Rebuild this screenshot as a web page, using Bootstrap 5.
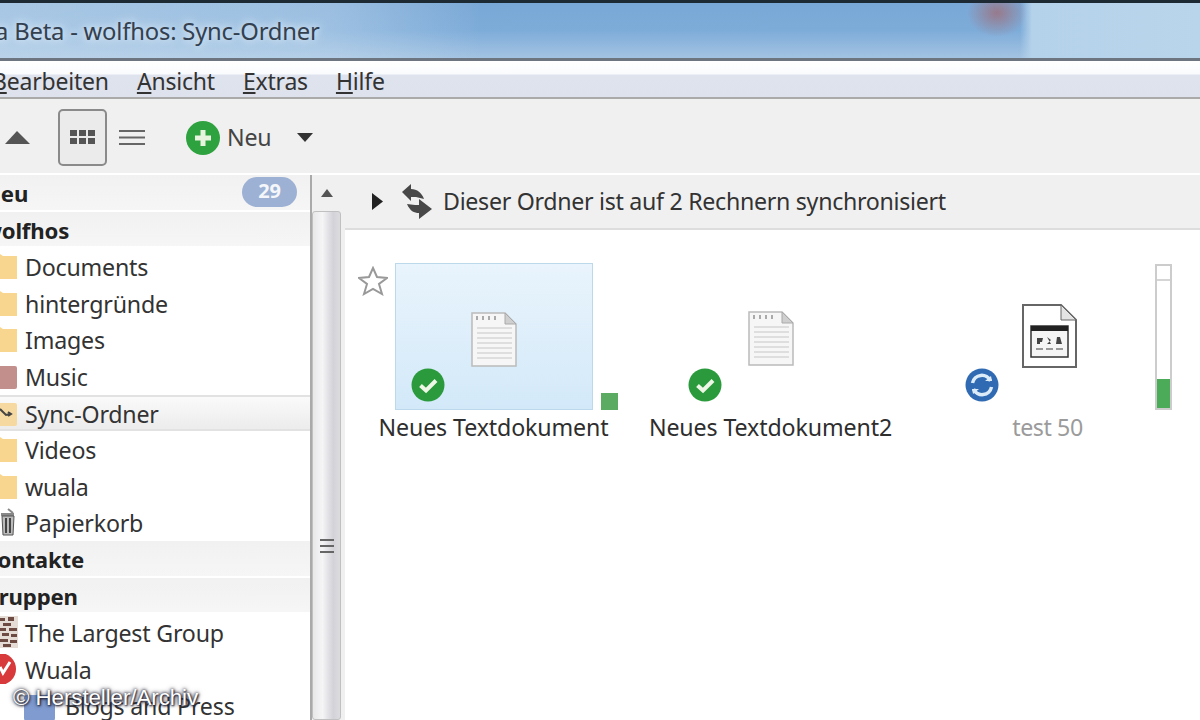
<!DOCTYPE html>
<html lang="de"><head><meta charset="utf-8"><title>Wuala Beta</title>
<link href="https://cdn.jsdelivr.net/npm/bootstrap@5.3.0/dist/css/bootstrap.min.css" rel="stylesheet">
<style>
html,body{width:1200px;height:720px;overflow:hidden;margin:0}
body{font-family:"Noto Sans","Open Sans",sans-serif;font-size:23.2px;color:#333;background:#fff;position:relative;letter-spacing:-.2px}
.titlebar{height:61px;border-top:3px solid #1d2a33;border-bottom:3px solid #6d7680;background:
 radial-gradient(ellipse 30px 24px at 997px 10px,rgba(170,90,90,.6),transparent),
 linear-gradient(90deg,transparent 0,transparent 1020px,#b4d2ea 1032px,#b9d5ec 100%),
 linear-gradient(90deg,rgba(205,224,240,.55) 0,rgba(205,224,240,.4) 330px,transparent 480px),
 linear-gradient(180deg,#7aa8d6 0,#7eacd9 50%,#a3c3e2 100%);color:#33404f;font-size:23.8px;line-height:56px;white-space:nowrap}
.titlebar span{margin-left:-5px;text-shadow:0 0 12px #dceaf5,0 0 6px #dceaf5}
.menubar{height:38px;background:linear-gradient(180deg,#fff 0,#fafbfd 35%,#dfe3ee 40%,#dde2ed 100%);border-bottom:2px solid #aaa;gap:28px;line-height:41px;font-size:23px}
.menubar div:first-child{margin-left:-8px}
.toolbar{height:76px;background:#f0f0f0;border-bottom:2px solid #fff;padding-top:3px}
.viewbtn{width:49px;height:57px;padding:0;background:#ebebeb;border:2px solid #8a8a8a;border-radius:5px;margin-left:24px}
.listicon{margin-left:12px}
.plusicon{margin-left:41px}
.dropicon{margin-left:26px}
.mainarea{height:545px}
.sidepane{width:310px;background:#fff;overflow:hidden}
.siderow{height:36.6px;flex:none;line-height:38px;white-space:nowrap}
.sidehead{font-weight:700;background:linear-gradient(180deg,#f1f1f1,#f6f6f6);border-bottom:2px solid #fff;color:#222;font-size:22.2px}
.sidehead .headname{margin-left:-17px}
.sideitem{padding-left:25px;position:relative}
.sideitem svg{position:absolute;left:-14px;top:5px}
.sideitem .svgsel{top:3px}
.sideitem .svgtall{top:3px}
.sideitem .svgmosaic{top:2px}
.sel{background:linear-gradient(180deg,#fafafa,#ececec);border-top:2px solid #e2e2e2;border-bottom:2px solid #e2e2e2;line-height:34px}
.countpill{background:#9db1d4;color:#f4f6fa;font-size:20px;width:55px;height:30px;padding:4px 0;margin-left:auto;margin-right:13px;margin-top:2px}
.scroller{width:32px;background:#f0f0f0;border-left:2px solid #aaa}
.scrollup{height:36px}
.scrollthumb{height:510px;background:linear-gradient(90deg,#e8e8ea,#f5f5f6 35%,#d2d2d8 75%,#dcdce0);border:1px solid #c0c0c0;border-radius:3px;margin-right:1px;padding-top:326px}
.divpane{width:3px;background:#f0f0f0}
.contentpane{flex:1;background:#fff}
.infobar{height:55px;background:#f0f0f0;border-bottom:2px solid #ddd;padding-left:27px;gap:19px;letter-spacing:-.3px}
.syncicon{margin-right:-8px}
.tiles{padding:33px 0 0 10px}
.tile{width:277px;height:190px;flex:none;position:relative}
.thumb{width:198px;height:147px;margin:0 auto;display:flex;justify-content:center;align-items:flex-start;padding-top:48px}
.thumbsel{background:linear-gradient(180deg,#e9f4fc,#d3e9f9);border:1px solid #bcd9ec}
.thumbexe{padding-top:41px;padding-left:4px}
.tilelabel{text-align:center;line-height:34px;white-space:nowrap;color:#2e2e2e;letter-spacing:-.12px}
.muted{color:#9b9b9b;letter-spacing:-.4px}
.starmark{position:absolute;left:3px;top:3px}
.statusdot{position:absolute;left:56px;top:105px}
.greensq{position:absolute;left:246px;top:130px;width:17px;height:17px;background:#5cab63}
.levelbar{position:absolute;left:246px;top:1px;width:17px;height:146px;border:2px solid #ccc;background:#fff}
.leveltick{height:15px;border-bottom:2px solid #d5d5d5}
.levelfill{position:absolute;left:0;right:0;bottom:0;height:29px;background:#4cab58}
.credit{position:absolute;left:13px;top:685px;font-family:"Liberation Sans",sans-serif;font-size:22.4px;color:#fff;letter-spacing:-.1px;text-shadow:0 0 3px #223,0 0 5px #334,1px 1px 2px #223;line-height:26px}
.blogitem{padding-left:65px}
.blogitem svg{left:24px;top:8px}
.toolneu{margin-left:7px;color:#444}
</style></head><body>
<div class="titlebar"><span>a Beta - wolfhos: Sync-Ordner</span></div>
<div class="menubar d-flex">
 <div><u>B</u>earbeiten</div><div><u>A</u>nsicht</div><div><u>E</u>xtras</div><div><u>H</u>ilfe</div>
</div>
<div class="toolbar d-flex align-items-center">
 <svg width="30" height="18" viewBox="0 0 30 18" class="ms-1"><path d="M13 2 26 15H1z" fill="#555"/></svg>
 <div class="viewbtn d-flex align-items-center justify-content-center">
  <svg width="25" height="15" viewBox="0 0 25 15" fill="#555"><rect x="0" y="0" width="7" height="6"/><rect x="9" y="0" width="7" height="6"/><rect x="18" y="0" width="7" height="6"/><rect x="0" y="8" width="7" height="6"/><rect x="9" y="8" width="7" height="6"/><rect x="18" y="8" width="7" height="6"/></svg>
 </div>
 <svg width="26" height="17" viewBox="0 0 26 17" class="listicon" stroke="#666" stroke-width="2"><path d="M0 2h26M0 8.500h26M0 15h26"/></svg>
 <svg width="34" height="34" viewBox="0 0 34 34" class="plusicon"><circle cx="17" cy="17" r="17" fill="#2ea23f"/><path d="M17 9v16M9 17h16" stroke="#e8f3e0" stroke-width="5"/></svg>
 <span class="toolneu">Neu</span>
 <svg width="16" height="10" viewBox="0 0 16 10" class="dropicon"><path d="M0 0h16L8 9z" fill="#333"/></svg>
</div>
<div class="mainarea d-flex">
 <div class="sidepane d-flex flex-column">
  <div class="siderow sidehead d-flex"><span class="headname">Neu</span><span class="badge rounded-pill countpill">29</span></div>
  <div class="siderow sidehead"><span class="headname">wolfhos</span></div>
  <div class="siderow sideitem"><svg width="32" height="26"><use href="#fold"/></svg>Documents</div>
  <div class="siderow sideitem"><svg width="32" height="26"><use href="#fold"/></svg>hintergründe</div>
  <div class="siderow sideitem"><svg width="32" height="26"><use href="#fold"/></svg>Images</div>
  <div class="siderow sideitem"><svg width="32" height="26"><rect y="3" width="31" height="23" rx="2" fill="#c28f8d"/></svg>Music</div>
  <div class="siderow sideitem sel"><svg width="32" height="26" class="svgsel"><rect y="3" width="31" height="23" rx="2" fill="#f5d9a0"/><path d="M14 9l6 6 4-1M22 12l3 2-3 2" stroke="#444" stroke-width="2" fill="none"/></svg>Sync-Ordner</div>
  <div class="siderow sideitem"><svg width="32" height="26"><use href="#fold"/></svg>Videos</div>
  <div class="siderow sideitem"><svg width="32" height="26"><use href="#fold"/></svg>wuala</div>
  <div class="siderow sideitem"><svg width="30" height="30" class="svgtall" viewBox="0 0 30 30"><path d="M15 6h13v3H15z" fill="#888"/><path d="M16 9h12l-1 19H17z" fill="#bbb" stroke="#555"/><path d="M20 11v15M24 11v15" stroke="#444" stroke-width="2"/><path d="M22 2l5 4" stroke="#888" stroke-width="2"/></svg>Papierkorb</div>
  <div class="siderow sidehead"><span class="headname">Kontakte</span></div>
  <div class="siderow sidehead"><span class="headname">Gruppen</span></div>
  <div class="siderow sideitem"><svg width="32" height="32" class="svgmosaic" viewBox="0 0 32 32"><rect x="14" width="18" height="32" fill="#e6dcd6"/><path d="M14 2h5v3h-5zM22 1h6v4h-6zM17 7h8v3h-8zM14 12h6v3h-6zM23 12h8v3h-8zM16 17h7v3h-7zM25 18h6v3h-6zM14 23h8v3h-8zM24 24h7v3h-7zM17 28h8v3h-8z" fill="#6d4a42"/></svg>The Largest Group</div>
  <div class="siderow sideitem"><svg width="32" height="30" viewBox="0 0 32 30" class="svgtall"><circle cx="14" cy="15" r="16" fill="#d8393a"/><path d="M14 13l3 6 7-11" stroke="#fff" stroke-width="3" fill="none"/></svg>Wuala</div>
  <div class="siderow sideitem blogitem"><svg width="32" height="26"><rect width="31" height="26" rx="3" fill="#7f9bd0"/></svg>Blogs and Press</div>
 </div>
 <div class="scroller d-flex flex-column">
  <div class="scrollup d-flex align-items-center justify-content-center"><svg width="12" height="8" viewBox="0 0 12 8"><path d="M6 0l6 8H0z" fill="#555"/></svg></div>
  <div class="scrollthumb d-flex justify-content-center">
   <svg width="14" height="18" viewBox="0 0 14 18" stroke="#666" stroke-width="2"><path d="M0 2h14M0 8h14M0 14h14"/></svg>
  </div>
 </div>
 <div class="divpane"></div>
 <div class="contentpane d-flex flex-column">
  <div class="infobar d-flex align-items-center">
   <svg width="11" height="17" viewBox="0 0 11 17"><path d="M0 0l11 8.500L0 17z" fill="#222"/></svg>
   <svg width="30" height="35" viewBox="0 0 30 35" class="syncicon"><path d="M0 8 9 0V5C15 5 20 9 22 15L14 13H9V17Z" fill="#484848"/><path d="M30 25 17 15V21H13L5 20C8 27 12 29 17 29V35Z" fill="#484848"/></svg>
   <span>Dieser Ordner ist auf 2 Rechnern synchronisiert</span>
  </div>
  <div class="tiles d-flex">
   <div class="tile">
    <div class="thumb thumbsel"><svg width="46" height="55"><use href="#doc"/></svg></div>
    <svg class="starmark" width="30" height="30" viewBox="0 0 30 30"><path d="M15 2l4 9 10 1-8 6 3 10-9-5-9 5 3-10-8-6 10-1z" fill="#fff" stroke="#999" stroke-width="2"/></svg>
    <svg class="statusdot" width="34" height="34"><use href="#ok"/></svg>
    <div class="greensq"></div>
    <div class="tilelabel">Neues Textdokument</div>
   </div>
   <div class="tile">
    <div class="thumb"><svg width="46" height="55"><use href="#doc"/></svg></div>
    <svg class="statusdot" width="34" height="34"><use href="#ok"/></svg>
    <div class="tilelabel">Neues Textdokument2</div>
   </div>
   <div class="tile">
    <div class="thumb thumbexe"><svg width="55" height="64" viewBox="0 0 55 64"><path d="M1 1h38l15 15v47H1z" fill="#fff" stroke="#666" stroke-width="2"/><path d="M39 1v15h15z" fill="#e4e4e4" stroke="#666"/><rect x="9" y="22" width="37" height="31" fill="#f5f5f5" stroke="#333" stroke-width="1.500"/><rect x="9" y="22" width="37" height="5" fill="#222"/><path d="M15 34h6l-1 4h-2v2h-3zM25 33l4 3-4 4h4M35 33h3l2 7h-6z" fill="#444"/><path d="M14 45h7M24 45h7M34 45h7" stroke="#999" stroke-width="2"/></svg></div>
    <svg class="statusdot" width="34" height="34"><circle cx="17" cy="17" r="16.500" fill="#2f6ab2"/><path d="M7.500 15a9.500 9.500 0 0 1 18-2M26.500 19a9.500 9.500 0 0 1-18 2" stroke="#dcebf8" stroke-width="3.500" fill="none"/><path d="M20 13h7l-1-5zM14 21H7l1 5z" fill="#dcebf8"/></svg>
    <div class="levelbar"><div class="leveltick"></div><div class="levelfill"></div></div>
    <div class="tilelabel muted">test 50</div>
   </div>
  </div>
 </div>
</div>
<div class="credit">© Hersteller/Archiv</div>
<svg width="0" height="0" class="position-absolute">
 <defs>
  <g id="fold"><path d="M0 1h14l3 2h14v23H0z" fill="#f9d68f"/></g>
  <g id="doc"><path d="M1 1h33l11 11v42H1z" fill="#f6f6f6" stroke="#bbb" stroke-width="1.500"/><path d="M34 1v11h11z" fill="#cfcfcf" stroke="#aaa"/><path d="M6 16h35M6 21h35M6 26h35M6 31h35M6 36h35M6 41h35M6 46h35" stroke="#c6c6c6"/><path d="M6 4v4M12 4v4M18 4v4M24 4v4" stroke="#aaa" stroke-width="2"/></g>
  <g id="ok"><circle cx="17" cy="17" r="16.500" fill="#2a9a3c"/><path d="M9.500 17.500l5.500 5 10-10" stroke="#eef6e6" stroke-width="4" fill="none"/></g>
 </defs>
</svg>
</body></html>
